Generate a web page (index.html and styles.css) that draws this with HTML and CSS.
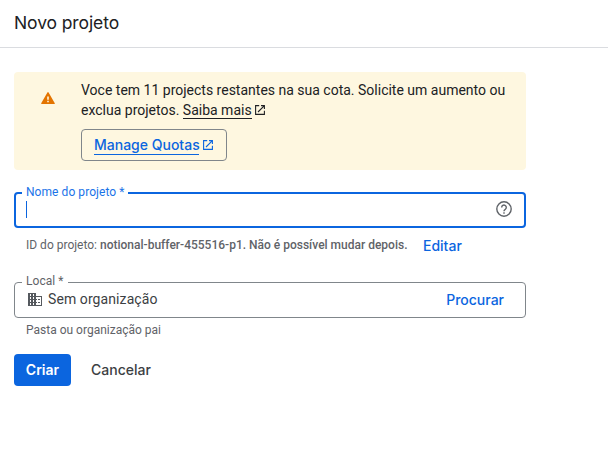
FILE: index.html
```html
<!DOCTYPE html>
<html lang="pt-BR">
<head>
<meta charset="utf-8">
<title>Novo projeto</title>
<link rel="stylesheet" href="styles.css">
</head>
<body>
<header class="header"><h1 class="title">Novo projeto</h1></header>
<main class="content">
  <section class="banner">
    <svg class="warning" viewBox="0 0 14 12"><path fill="#e37400" d="M7 0Q7.3 0 7.6 .6L13.8 11.2Q14.1 12 13.4 12H.6Q-.1 12 .2 11.2L6.4.6Q6.7 0 7 0Z"/><path fill="#fef7e0" d="M6.2 4.6h1.6v3.2H6.2zM6.2 8.7h1.6v1.6H6.2z"/></svg>
    <div class="banner-body">
      <p class="banner-text">Voce tem 11 projects restantes na sua cota. Solicite um aumento ou<br>exclua projetos. <a class="more">Saiba mais</a><svg class="open" viewBox="0 0 10 10"><path d="M4.2.6H.6v8.8h8.8V5.8M6 .6h3.4V4M9.4.6 3 7"/></svg></p>
      <a class="quotas"><span class="quotas-label">Manage Quotas</span><svg class="open" viewBox="0 0 10 10"><path d="M4.2.6H.6v8.8h8.8V5.8M6 .6h3.4V4M9.4.6 3 7"/></svg></a>
    </div>
  </section>
  <fieldset class="field field-active">
    <legend>Nome do projeto *</legend>
    <div class="field-row">
      <span class="caret"></span>
      <svg class="help" viewBox="0 0 16 16"><circle cx="8" cy="8" r="7.2"/><path d="M5.7 6.4a2.3 2.3 0 1 1 3.7 1.8C8.4 9 8 9.2 8 10.2M8 11.2v1.5"/></svg>
    </div>
  </fieldset>
  <div class="hint id-hint"><span class="id-text">ID do projeto: <b>notional-buffer-455516-p1. Não é possível mudar depois.</b></span><a class="link edit">Editar</a></div>
  <fieldset class="field field-local">
    <legend>Local *</legend>
    <div class="field-row">
      <svg class="building" viewBox="0 0 14 13"><path fill="#55595e" fill-rule="evenodd" d="M0 0h8v3h6v10H0zM2 1v2h1V1zM5 1v2h1V1zM2 4v2h1V4zM5 4v2h1V4zM2 7v2h1V7zM5 7v2h1V7zM2 10v2h1v-2zM5 10v2h1v-2zM8 4v2h1v1H8v2h1v1H8v2h5V4zM10 6h2v1h-2zM10 9h2v1h-2z"/></svg>
      <span class="value">Sem organização</span>
      <a class="link browse">Procurar</a>
    </div>
  </fieldset>
  <div class="hint">Pasta ou organização pai</div>
  <div class="actions"><button class="create">Criar</button><button class="cancel">Cancelar</button></div>
</main>
</body>
</html>
```
FILE: styles.css
```css
* { box-sizing: border-box; }
body { margin: 0; background: #fff; color: #202124; font: 14px/20px Roboto, sans-serif; }
.header { height: 48px; padding: 11px 14px 0; border-bottom: 1px solid #dadce0; }
.title { margin: 0; font: 400 17.5px/24px Inter, sans-serif; letter-spacing: -0.1px; }
.content { width: 512px; margin: 24px 0 0 14px; }
.banner { display: flex; height: 98px; padding-left: 27px; background: #fef7e0; border-radius: 4px; }
.warning { width: 14px; height: 12px; margin: 20px 26px 0 0; }
.banner-body { padding-top: 8px; white-space: nowrap; }
.banner-text { margin: 0; }
.more { border-bottom: 1px solid #202124; }
.open { width: 10px; height: 10px; fill: none; stroke: currentColor; stroke-width: 1.1; }
.banner-text .open { margin-left: 3px; vertical-align: 0; }
.quotas { display: flex; align-items: center; width: 146px; height: 32px; margin-top: 9px; padding-left: 12px; border: 1px solid #80868b; border-radius: 4px; color: #0b65df; font: 500 14px/18px Inter, sans-serif; }
.quotas-label { width: 105px; margin-right: 4px; border-bottom: 1px solid #0b65df; }
.field { height: 42px; margin: 0; padding: 0 11px; border: 1px solid #80868b; border-radius: 4px; }
.field legend { height: 12px; margin-left: -4px; padding: 0 4px; color: #5f6368; font-size: 12px; line-height: 10px; letter-spacing: 0.06px; }
.field-active { height: 41px; margin-top: 17px; padding: 0 10px; border: 2px solid #0b65df; }
.field-active legend { height: 11px; line-height: 11px; color: #1a73e8; }
.field-row { display: flex; align-items: center; height: 23px; }
.field-active .field-row { height: 22px; }
.caret { width: 1px; height: 17px; margin-top: 1px; background: #0b65df; }
.help { width: 16px; height: 16px; margin-left: auto; margin-right: 2px; fill: none; stroke: #5f6368; stroke-width: 1.4; }
.hint { margin-left: 12px; color: #5f6368; font-size: 12px; line-height: 16px; white-space: nowrap; }
.id-hint { display: flex; align-items: center; height: 20px; margin-top: 8px; margin-bottom: 20px; }
.id-hint b { font-weight: 500; }
.id-text { width: 397px; margin-top: -2px; }
.link { color: #0b65df; font: 500 14px/20px Inter, sans-serif; }
.building { width: 14px; height: 13px; margin-left: 2px; }
.value { margin-left: 6px; margin-top: -2px; color: #3c4043; letter-spacing: 0.09px; }
.browse { margin-left: auto; margin-right: 10px; }
.field-local + .hint { margin-top: 4px; }
.actions { display: flex; margin-top: 16px; }
.actions button { height: 32px; padding: 0; border: 0; border-radius: 4px; font: 500 14px/20px Inter, sans-serif; }
.actions .create { width: 57px; background: #0b65df; color: #fff; font-weight: 600; }
.actions .cancel { margin-left: 20px; background: none; color: #3c4043; }
```
